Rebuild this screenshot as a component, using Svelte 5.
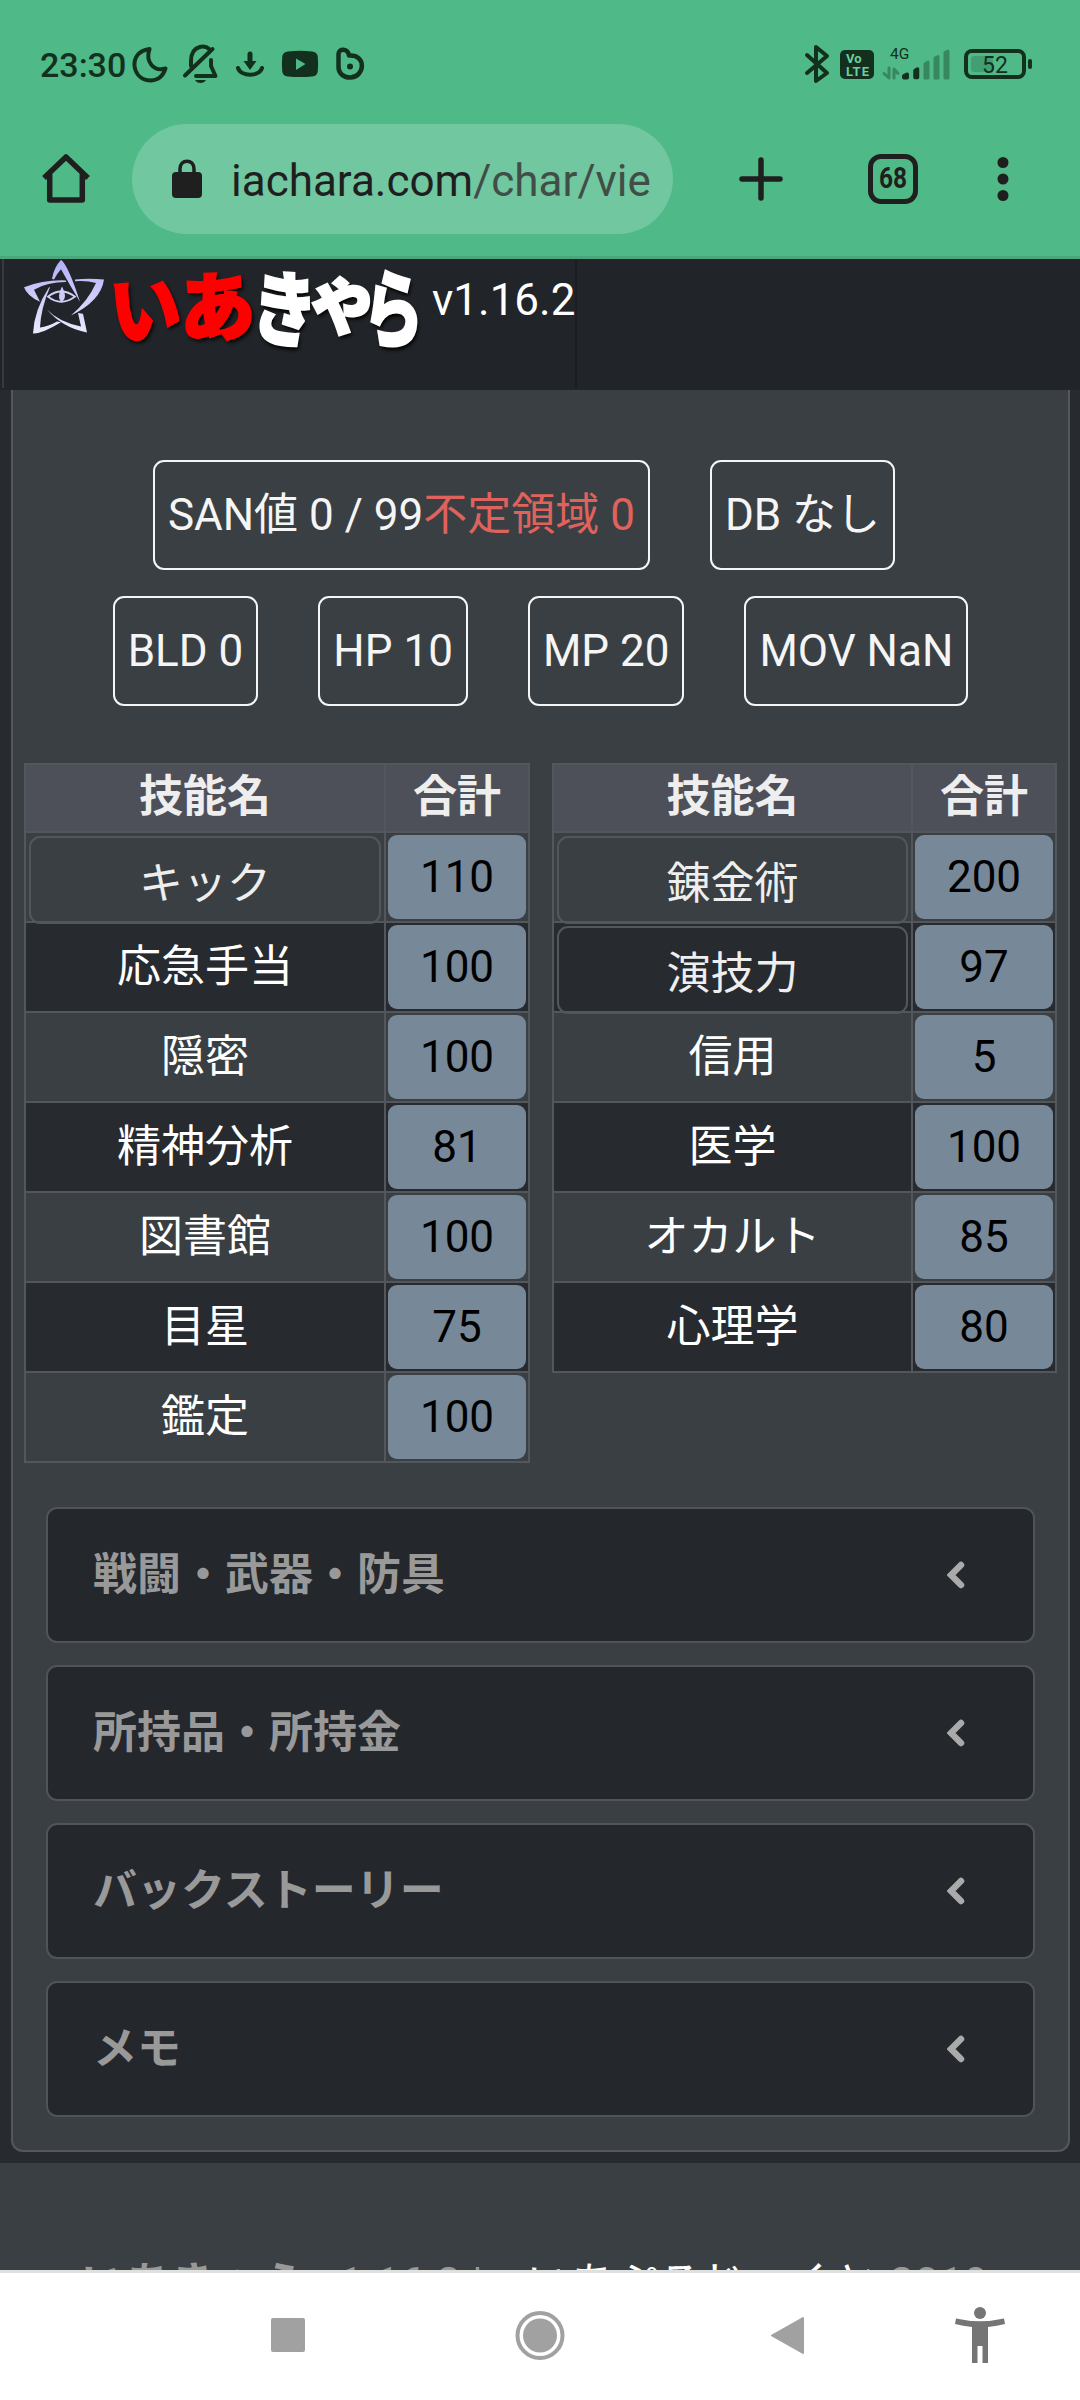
<script>
  const statRows = [
    [{ label: 'SAN値 0 / 99', extra: '不定領域 0' }, { label: 'DB なし' }],
    [{ label: 'BLD 0' }, { label: 'HP 10' }, { label: 'MP 20' }, { label: 'MOV NaN' }]
  ];

  const skillTables = [
    [
      { name: 'キック', total: 110, boxed: true },
      { name: '応急手当', total: 100 },
      { name: '隠密', total: 100 },
      { name: '精神分析', total: 81 },
      { name: '図書館', total: 100 },
      { name: '目星', total: 75 },
      { name: '鑑定', total: 100 }
    ],
    [
      { name: '錬金術', total: 200, boxed: true },
      { name: '演技力', total: 97, boxed: true },
      { name: '信用', total: 5 },
      { name: '医学', total: 100 },
      { name: 'オカルト', total: 85 },
      { name: '心理学', total: 80 }
    ]
  ];

  const sections = ['戦闘・武器・防具', '所持品・所持金', 'バックストーリー', 'メモ'];
</script>

<div class="screen">
  <header class="browser">
    <div class="status">
      <span class="clock">23:30</span>
      <svg class="status-left" width="240" height="44" viewBox="130 42 240 44" fill="none" stroke="#13301f" stroke-width="4" stroke-linecap="round" stroke-linejoin="round">
        <path d="M149.500 49 C137 51 134 59 134.500 66 C136 76 143 80.500 151 80.500 C159 80 163.500 75 165.500 68.500 C154 72 145 62 149.500 49Z" />
        <path d="M191 66 V61 C191 44 208 44 210 51 M211 60 V66 L215.500 76 H196 M185 75.500 L212.500 49" />
        <path d="M195 80 H206 C204 84 197 84 195 80Z" fill="#13301f" stroke="none" />
        <path d="M250 54 V64" stroke-width="5" />
        <path d="M243.500 61 H256.500 L250 70Z" fill="#13301f" stroke="none" />
        <path d="M238 68 C241 77 259 77 262 68" />
        <path d="M288 51.500 C296 50.600 304 50.600 312 51.500 Q317.500 52 317.800 57 Q318.400 64 317.800 71 Q317.500 76 312 76.500 C304 77.200 296 77.200 288 76.500 Q282.500 76 282.200 71 Q281.600 64 282.200 57 Q282.500 52 288 51.500Z" fill="#13301f" stroke="none" />
        <path d="M296 58.500 L305.500 64 L296 70Z" fill="#50b988" stroke="none" />
        <path d="M338.500 67 V54 C338.500 48 348 48 349 55.500 C367 54 365 77.500 350 77.500 C343 77.500 338.500 73 338.500 67Z" stroke-width="4.500" />
        <circle cx="350" cy="66.500" r="3" fill="#13301f" stroke="none" />
      </svg>
      <span class="spacer"></span>
      <svg class="status-right" width="236" height="48" viewBox="800 42 236 48" fill="none" stroke="#13301f" stroke-linecap="round" stroke-linejoin="round">
        <path d="M807 55 L827 73 L816 81 V47 L827 56 L807 73" stroke-width="4" />
        <rect x="840" y="50" width="34" height="29" rx="5" fill="#13301f" stroke="none" />
        <g class="volte">
          <text x="846" y="63">Vo</text>
          <text x="846" y="76" textLength="23">LTE</text>
        </g>
        <text class="net" x="890" y="59">4G</text>
        <path d="M889 68 V78 L884 73.500 M894 78 V69 L898 73.500" stroke="#37875f" stroke-width="3" />
        <path d="M904 76 L907 74.500 V77.500 H904Z" fill="#13301f" stroke-width="4" />
        <path d="M915 70.500 L917.500 69 V77.500 H915Z" fill="#13301f" stroke-width="3.500" />
        <g fill="#37875f" stroke="#37875f" stroke-width="3">
          <path d="M925 64 L928 62 V78 H925Z" />
          <path d="M935 58 L938 56.500 V78 H935Z" />
          <path d="M945 52.500 L948 51 V78 H945Z" />
        </g>
        <rect x="971" y="56" width="22" height="16" rx="3" fill="#429f73" stroke="none" />
        <rect x="966" y="51" width="58" height="26" rx="6" stroke-width="4" />
        <path d="M1030 61 V67" stroke-width="4" />
        <text class="batt" x="982" y="72.500">52</text>
      </svg>
    </div>
    <div class="toolbar">
      <svg class="home" width="50" height="52" viewBox="0 0 50 52" fill="none" stroke="#1f1f1f" stroke-width="5.500" stroke-linecap="round" stroke-linejoin="round">
        <path d="M3 25 L25 4 L47 25" stroke-linecap="butt" />
        <path d="M8.700 22 V47 H41.300 V22" />
      </svg>
      <div class="url">
        <svg width="30" height="40" viewBox="0 0 30 40">
          <path d="M8 15 V10 C8 -.5 22 -.5 22 10 V15" fill="none" stroke="#1f1f1f" stroke-width="3.500" />
          <rect y="13" width="30" height="26" rx="4" fill="#1f1f1f" />
        </svg>
        <span class="address">iachara.com<span class="path">/char/vie</span></span>
      </div>
      <svg class="plus" width="44" height="44" viewBox="0 0 44 44" stroke="#1f1f1f" stroke-width="5.500" stroke-linecap="round">
        <path d="M22 3 V41 M3 22 H41" />
      </svg>
      <div class="tabs"><span>68</span></div>
      <svg class="dots" width="12" height="44" viewBox="0 0 12 44" fill="#1f1f1f">
        <circle cx="6" cy="5.500" r="5.500" />
        <circle cx="6" cy="22" r="5.500" />
        <circle cx="6" cy="38.500" r="5.500" />
      </svg>
    </div>
  </header>

  <div class="site-header">
    <div class="brand">
      <svg class="star" width="84" height="77" viewBox="0 0 84 90" preserveAspectRatio="none">
        <defs>
          <linearGradient id="starFill" x1="0" y1="0" x2="0" y2="90" gradientUnits="userSpaceOnUse">
            <stop offset="0" stop-color="#b0aef8" />
            <stop offset="1" stop-color="#eeecff" />
          </linearGradient>
        </defs>
        <g fill="url(#starFill)">
          <path d="M29 23 Q31 10 38 1 Q45 7 57 50 Q47 31 38 12 Q34 17 31 24Z" />
          <path d="M43 25 Q21 24 1 33 Q4 43 17 50 L11 36 Q24 27 43 27Z" />
          <path d="M52 24 Q66 22 81 24 Q78 49 48 66 Q65 49 73 28 Q64 25 52 26Z" />
          <path d="M26 33 Q11 60 10 87 Q18 88 38 74 L34 73 Q25 79 17 80 Q18 57 27 33Z" />
          <path d="M24 59 Q35 73 58 79 L55 63 L60 64 L64 86 Q39 80 24 59Z" />
          <path d="M39 32 Q45 45 39 50 Q33 46 39 32Z" />
        </g>
        <path d="M25 44 Q38 32 52 44 Q38 56 25 44Z" fill="none" stroke="#d3d1fb" stroke-width="2" />
      </svg>
      <span class="logo"><span class="k i">い</span><span class="k a">あ</span><span class="k ki">き</span><span class="k ya">ゃ</span><span class="k ra">ら</span></span>
      <span class="version">v1.16.2</span>
    </div>
  </div>

  <main class="page">
    <section class="card">
      <div class="stats">
        {#each statRows as row}
          <div class="stat-row">
            {#each row as stat}
              <div class="stat">{stat.label}{#if stat.extra}<span class="warn">{stat.extra}</span>{/if}</div>
            {/each}
          </div>
        {/each}
      </div>

      <div class="skills">
        {#each skillTables as rows}
          <div class="table">
            <div class="row head">
              <div class="name">技能名</div>
              <div class="total">合計</div>
            </div>
            {#each rows as skill, i}
              <div class="row" class:dark={i % 2 === 1}>
                <div class="name">
                  {#if skill.boxed}
                    <span class="box">{skill.name}</span>
                  {:else}
                    {skill.name}
                  {/if}
                </div>
                <div class="total"><span class="badge">{skill.total}</span></div>
              </div>
            {/each}
          </div>
        {/each}
      </div>

      <div class="sections">
        {#each sections as title}
          <div class="section">
            <span>{title}</span>
            <svg width="18" height="28" viewBox="0 0 18 28">
              <path d="M14 4 L4 14 L14 24" fill="none" stroke="#aaa" stroke-width="6.500" stroke-linecap="round" stroke-linejoin="miter" />
            </svg>
          </div>
        {/each}
      </div>
    </section>
  </main>

  <footer class="footer">
    <p><b>いあきゃら</b> v1.16.2 | <span class="author">いあぷろじぇくと</span> 2019</p>
  </footer>

  <nav class="android-nav">
    <svg width="1080" height="127" viewBox="0 0 1080 127">
      <rect x="271" y="45" width="34" height="34" rx="2" fill="#a1a1a1" />
      <circle cx="540" cy="62.500" r="22.500" fill="none" stroke="#a1a1a1" stroke-width="4" />
      <circle cx="540" cy="62.500" r="17" fill="#a1a1a1" />
      <path d="M803 45 V80 L772 62.500Z" fill="#a1a1a1" stroke="#a1a1a1" stroke-width="2" stroke-linejoin="round" />
      <g fill="#757575">
        <circle cx="980" cy="40" r="6" />
        <path d="M956 45.500 Q980 51 1004 45.500 L1005 51 Q997 53 988 54 V90 H982.500 V73 H977.500 V90 H972 V54 Q963 53 955 51Z" />
      </g>
    </svg>
  </nav>
</div>

<style>
  :global(body) {
    margin: 0;
    background: #272b30;
  }

  .screen {
    width: 1080px;
    height: 2400px;
    overflow: hidden;
    display: flex;
    flex-direction: column;
    background: #272b30;
    color: #f5f5f5;
    font-family: Roboto, 'Noto Sans CJK JP', sans-serif;
    font-size: 44px;
    line-height: 66px;
  }

  /* browser chrome */
  .browser {
    box-sizing: border-box;
    height: 259px;
    flex: none;
    background: #50b988;
    border-bottom: 3px solid #4ba67b;
  }

  .status {
    height: 86px;
    padding: 38px 44px 0 40px;
    display: flex;
    box-sizing: border-box;
  }

  .clock {
    width: 90px;
    font-size: 34px;
    font-weight: 500;
    line-height: 54px;
    color: #13301f;
    white-space: nowrap;
  }

  .status-left,
  .status-right {
    flex: none;
    margin-top: 4px;
  }

  .spacer {
    flex: 1;
  }

  .volte text {
    font: 700 13px Roboto, sans-serif;
    fill: #6fcea0;
    stroke: none;
  }

  .net {
    font: 400 15.5px Roboto, sans-serif;
    fill: #13301f;
    stroke: none;
  }

  .batt {
    font: 400 23px Roboto, sans-serif;
    fill: #13301f;
    stroke: none;
  }

  .toolbar {
    display: flex;
    align-items: center;
    height: 110px;
    margin-top: 38px;
    padding-left: 41px;
  }

  .url {
    box-sizing: border-box;
    width: 541px;
    height: 110px;
    margin-left: 41px;
    padding-left: 40px;
    border-radius: 55px;
    background: #71c79f;
    display: flex;
    align-items: center;
    overflow: hidden;
  }

  .address {
    margin: 4px 0 0 29px;
    font-size: 44px;
    color: #1f1f1f;
    white-space: nowrap;
  }

  .path {
    color: #414e47;
  }

  .plus {
    margin-left: 66px;
  }

  .tabs {
    box-sizing: border-box;
    width: 50px;
    height: 50px;
    margin-left: 85px;
    border: 5.5px solid #1f1f1f;
    border-radius: 13px;
    font: 700 29.5px/39px Roboto, sans-serif;
    color: #1f1f1f;
    display: flex;
    justify-content: center;
  }

  .tabs span {
    transform: scaleX(0.83);
  }

  .dots {
    margin-left: 79px;
  }

  /* site header */
  .site-header {
    height: 131px;
    flex: none;
    background: #212428;
  }

  .brand {
    box-sizing: border-box;
    width: 575px;
    height: 129px;
    margin-left: 2px;
    padding-left: 19px;
    border-left: 2px solid #36393d;
    border-right: 2px solid #1c1f22;
    display: flex;
    align-items: flex-start;
  }

  .star {
    flex: none;
  }

  .logo {
    display: flex;
    flex: none;
    font-family: 'Noto Sans CJK JP', sans-serif;
    font-weight: 900;
    font-size: 76px;
    line-height: 90px;
    text-shadow: 2px 3px 4px #000;
  }

  .k {
    flex: none;
    display: block;
    width: 76px;
    -webkit-text-stroke: 2px currentColor;
  }

  .i,
  .a {
    color: #f00;
  }

  .ki,
  .ya,
  .ra {
    color: #fff;
  }

  .i {
    margin-left: -2px;
    transform: translateX(2px) scale(0.93, 1) rotate(-5deg);
  }

  .a {
    margin-left: -2px;
    transform: translateY(-2px) rotate(-3deg);
  }

  .ki {
    margin-left: -8px;
    transform: scale(0.86, 1.08) rotate(8deg);
  }

  .ya {
    margin-left: -19px;
    transform: translateY(-9px) scale(0.95, 1) rotate(-4deg);
  }

  .ra {
    margin-left: -24px;
    transform: scale(0.8, 1.12) rotate(4deg);
  }

  .version {
    margin-left: 0;
    margin-top: 8px;
    font-size: 44px;
    color: #fff;
  }

  /* character sheet */
  .page {
    height: 1773px;
    flex: none;
    padding: 0 10px 0 11px;
  }

  .card {
    box-sizing: border-box;
    height: 1762px;
    border: 2px solid #54585c;
    border-top: 0;
    border-radius: 0 0 12px 12px;
    background: #3a3f43;
  }

  .stats {
    display: flex;
    flex-direction: column;
    gap: 26px;
    padding-top: 70px;
  }

  .stat-row {
    display: flex;
    justify-content: center;
    gap: 60px;
  }

  .stat-row:first-child {
    padding-right: 33px;
  }

  .stat {
    box-sizing: border-box;
    height: 110px;
    padding: 20px 13px 18px;
    border: 2px solid #f5f5f5;
    border-radius: 11px;
    white-space: nowrap;
  }

  .warn {
    color: #e0625d;
  }

  .skills {
    display: flex;
    align-items: flex-start;
    justify-content: space-between;
    margin-top: 57px;
    padding: 0 11px;
    height: 700px;
  }

  .table {
    width: 502px;
    border: 2px solid #53575b;
    border-bottom: 0;
    text-align: center;
    color: #fff;
  }

  .table:last-child {
    width: 501px;
  }

  .row {
    display: flex;
    height: 88px;
    border-bottom: 2px solid #53575b;
  }

  .row.dark {
    background: #272a2f;
  }

  .row.head {
    height: 66px;
    background: #4e5059;
    color: #eee;
    font-weight: 700;
    line-height: 65px;
  }

  .name {
    flex: 1;
    line-height: 89px;
  }

  .head .name {
    line-height: 65px;
  }

  .total {
    box-sizing: border-box;
    width: 144px;
    padding: 2px;
    border-left: 2px solid #53575b;
  }

  .head .total {
    padding: 0;
  }

  .badge {
    display: block;
    height: 84px;
    border-radius: 9px;
    background: #778899;
    color: #000;
    line-height: 85px;
  }

  .box {
    display: block;
    box-sizing: border-box;
    height: 88px;
    margin: 3px 3px -3px;
    border: 2px solid #53575b;
    border-radius: 11px;
    color: #eee;
    line-height: 92px;
  }

  .sections {
    display: flex;
    flex-direction: column;
    gap: 22px;
    padding: 44px 33px 0;
  }

  .section {
    box-sizing: border-box;
    height: 136px;
    padding: 0 68px 0 45px;
    border: 2px solid #505458;
    border-radius: 11px;
    background: #24272b;
    color: #999;
    font-weight: 700;
    display: flex;
    align-items: center;
    justify-content: space-between;
  }

  .section span {
    margin-top: -1px;
  }

  .footer {
    height: 107px;
    flex: none;
    background: #3a3f43;
    overflow: hidden;
    color: #999;
    white-space: nowrap;
  }

  .footer p {
    margin: 88px 0 0;
    padding-right: 11px;
    text-align: center;
  }

  .footer b {
    letter-spacing: 1.2px;
  }

  .author {
    margin-left: 33px;
    color: #fff;
  }

  .android-nav {
    height: 127px;
    border-top: 3px solid #dfe1df;
    background: #fff;
  }

  .android-nav svg {
    display: block;
  }
</style>
